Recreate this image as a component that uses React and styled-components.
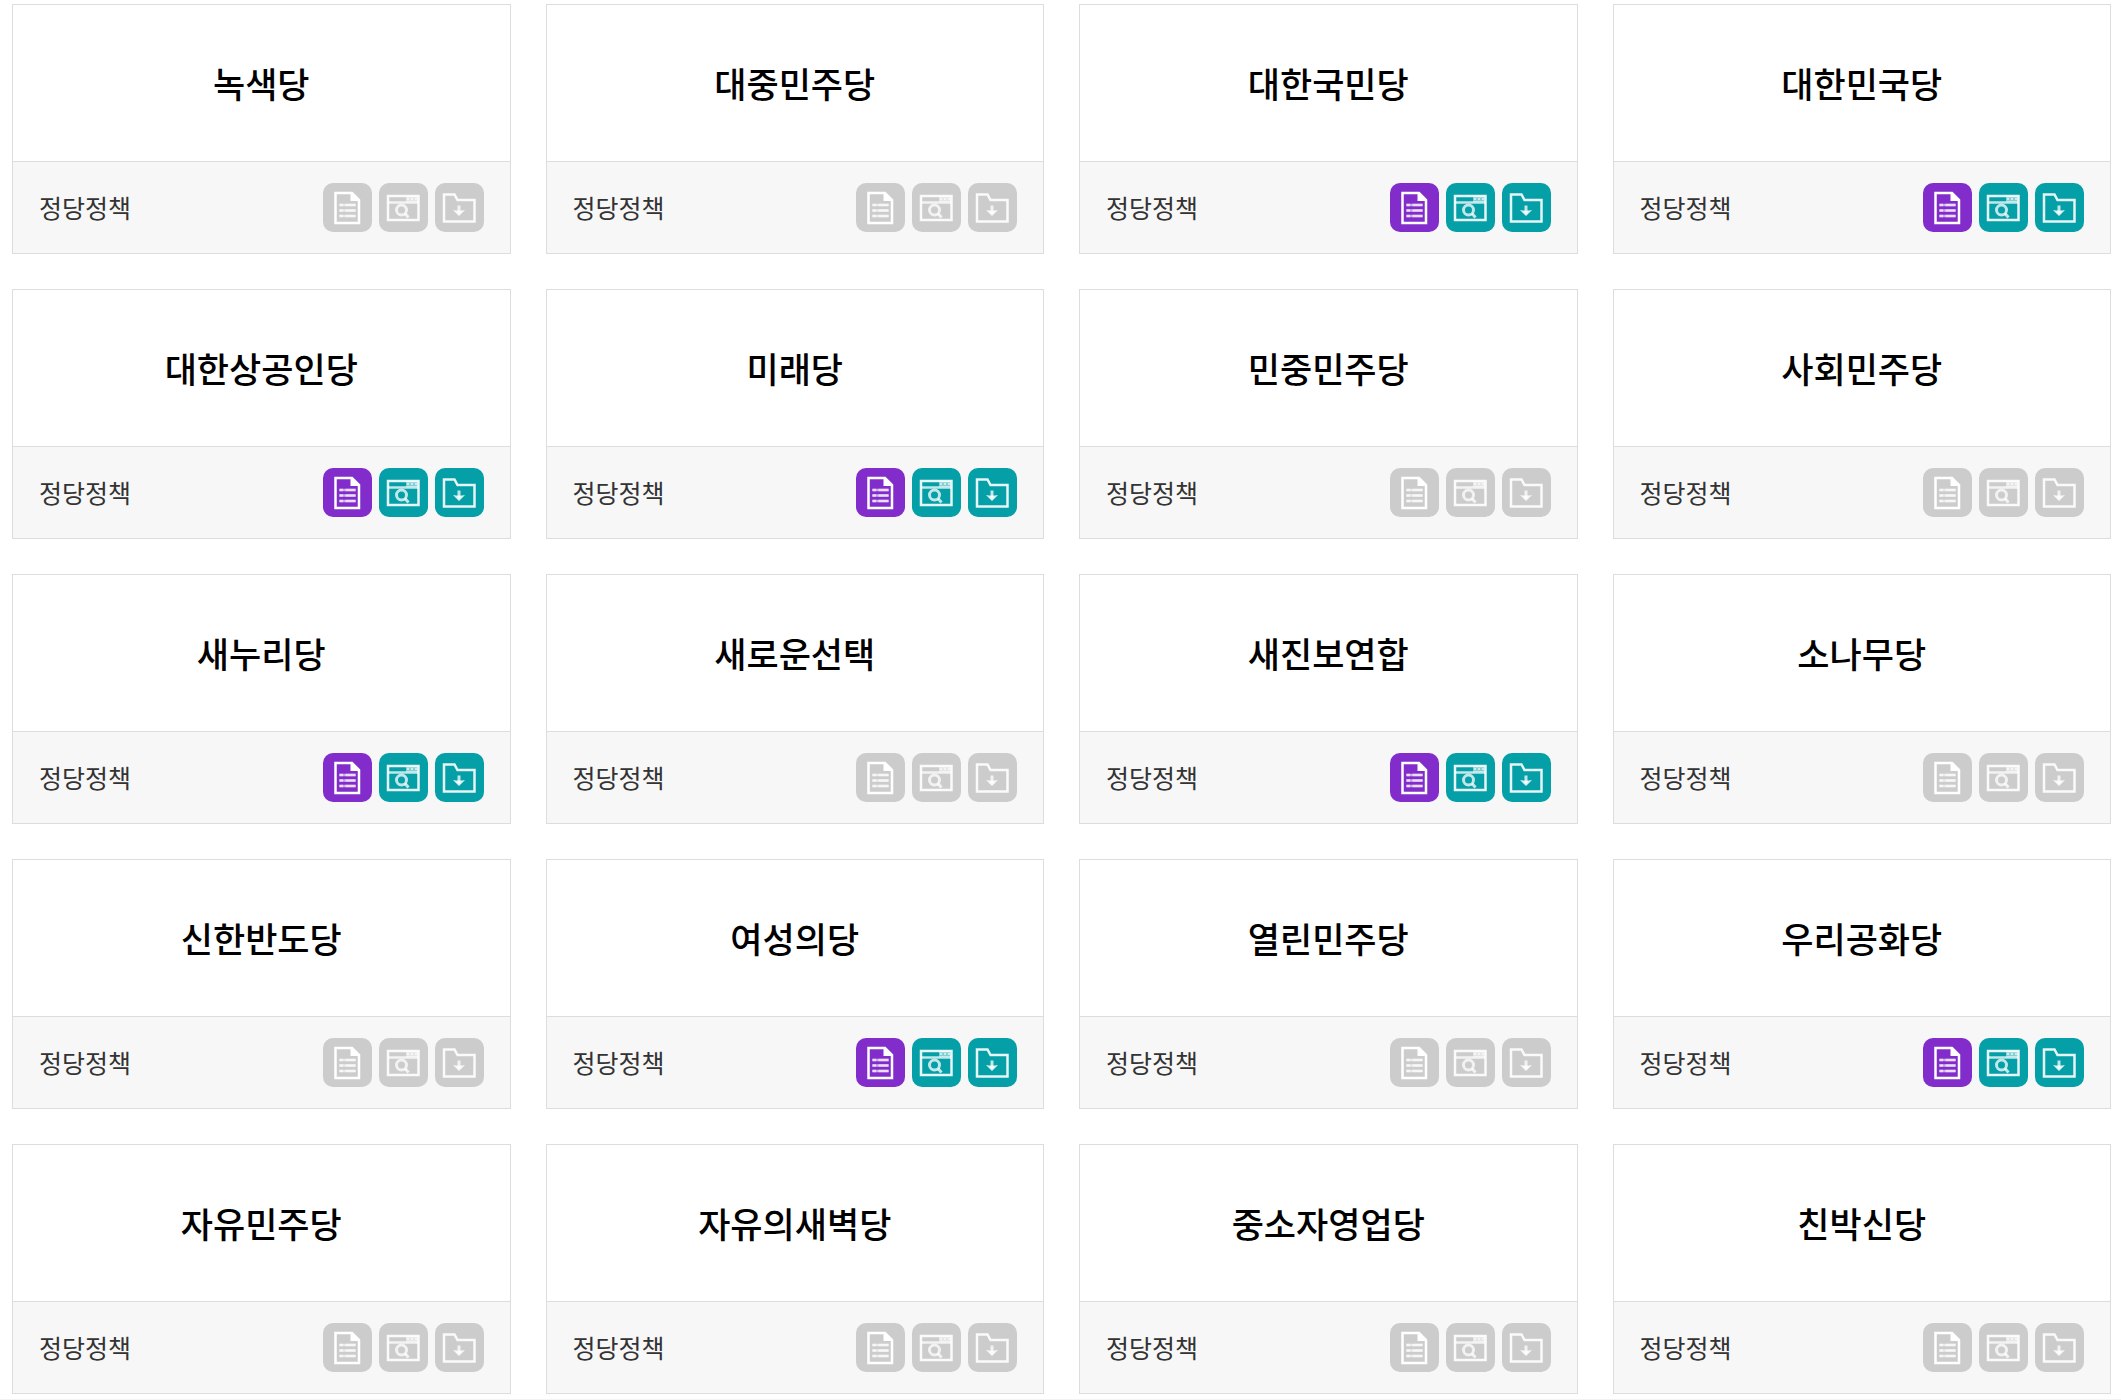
import React from 'react';
import styled, { createGlobalStyle } from 'styled-components';

const GlobalStyle = createGlobalStyle`
  *, *::before, *::after {
    box-sizing: border-box;
  }

  body {
    margin: 0;
    background: #fff;
    color: #333;
    font-family: 'Noto Sans CJK KR', 'Noto Sans', sans-serif;
  }
`;

const Page = styled.main`
  padding: 4px 10px 5px 12px;
  border-bottom: 1px solid #f3f3f3;
`;

const PartyList = styled.ul`
  display: grid;
  grid-template-columns: repeat(4, 1fr);
  gap: 35px;
  margin: 0;
  padding: 0;
  list-style: none;
`;

const Card = styled.li`
  border: 1px solid #ddd;
`;

const PartyName = styled.h2`
  display: flex;
  align-items: center;
  justify-content: center;
  height: 156px;
  margin: 0;
  color: #000;
  font-size: 35px;
  font-weight: 500;
  line-height: 48px;
`;

const CardFooter = styled.div`
  display: flex;
  align-items: center;
  justify-content: space-between;
  padding: 21px 26px;
  border-top: 1px solid #ddd;
  background: #f7f7f7;
`;

const Label = styled.span`
  padding-bottom: 2px;
  font-size: 25px;
  line-height: 36px;
`;

const Actions = styled.div`
  display: flex;
  gap: 7px;
`;

const IconButton = styled.button`
  width: 49px;
  height: 49px;
  padding: 0;
  border: 0;
  border-radius: 10px;
  background: ${props => props.$color};
  color: #fff;
  cursor: pointer;

  &:disabled {
    background: #ccc;
    cursor: default;
  }

  svg {
    display: block;
  }
`;

const DocumentIcon = () => (
  <svg width="49" height="49" viewBox="0 0 49 49" fill="none" stroke="currentColor" aria-hidden="true">
    <path d="M12.500 10h16.500l7 7v23H12.500z" strokeWidth="2.500" />
    <path d="M27.500 9v9h9z" fill="currentColor" stroke="none" />
    <path d="M16 22h17M16 27.500h17M16 33h17" strokeWidth="2.500" opacity="0.6" />
    <path d="M17 22h3M17 27.500h3M17 33h3" strokeWidth="2.500" opacity="0.6" />
    <path d="M22.500 22H32M22.500 27.500H32M22.500 33H32" strokeWidth="2.500" opacity="0.6" />
  </svg>
);

const PreviewIcon = () => (
  <svg width="49" height="49" viewBox="0 0 49 49" fill="none" stroke="currentColor" aria-hidden="true">
    <path d="M9 13h30.500v24H9z" strokeWidth="2.500" opacity="0.9" />
    <path d="M9 19.500h30" strokeWidth="2.500" opacity="0.75" />
    <path d="M27 13h12v6H27z" fill="currentColor" stroke="none" opacity="0.5" />
    <path d="M28 16h2M32 16h2M36 16h2" strokeWidth="2" opacity="0.6" />
    <circle cx="22.500" cy="27" r="5" strokeWidth="3" opacity="0.75" />
    <path d="M26 30.500l3.500 4" strokeWidth="3" opacity="0.75" />
  </svg>
);

const DownloadIcon = () => (
  <svg width="49" height="49" viewBox="0 0 49 49" fill="none" stroke="currentColor" aria-hidden="true">
    <path d="M9 11.500h10.500l3 5.500H39.500v21.500H9z" strokeWidth="2.500" opacity="0.9" />
    <path d="M24 22.500v8" strokeWidth="3" opacity="0.75" />
    <path d="M18 27l6 6 6-6-3 .5h-6z" fill="currentColor" stroke="none" opacity="0.85" />
  </svg>
);

const parties = [
  { name: '녹색당', open: false },
  { name: '대중민주당', open: false },
  { name: '대한국민당', open: true },
  { name: '대한민국당', open: true },
  { name: '대한상공인당', open: true },
  { name: '미래당', open: true },
  { name: '민중민주당', open: false },
  { name: '사회민주당', open: false },
  { name: '새누리당', open: true },
  { name: '새로운선택', open: false },
  { name: '새진보연합', open: true },
  { name: '소나무당', open: false },
  { name: '신한반도당', open: false },
  { name: '여성의당', open: true },
  { name: '열린민주당', open: false },
  { name: '우리공화당', open: true },
  { name: '자유민주당', open: false },
  { name: '자유의새벽당', open: false },
  { name: '중소자영업당', open: false },
  { name: '친박신당', open: false },
];

const PartyCard = ({ name, open }) => (
  <Card>
    <PartyName>{name}</PartyName>
    <CardFooter>
      <Label>정당정책</Label>
      <Actions>
        <IconButton type="button" $color="#822dcb" disabled={!open} aria-label={`${name} 정당정책 보기`}>
          <DocumentIcon />
        </IconButton>
        <IconButton type="button" $color="#059fa8" disabled={!open} aria-label={`${name} 미리보기`}>
          <PreviewIcon />
        </IconButton>
        <IconButton type="button" $color="#059fa8" disabled={!open} aria-label={`${name} 내려받기`}>
          <DownloadIcon />
        </IconButton>
      </Actions>
    </CardFooter>
  </Card>
);

const App = () => (
  <>
    <GlobalStyle />
    <Page>
      <PartyList>
        {parties.map(party => (
          <PartyCard key={party.name} {...party} />
        ))}
      </PartyList>
    </Page>
  </>
);

export default App;
